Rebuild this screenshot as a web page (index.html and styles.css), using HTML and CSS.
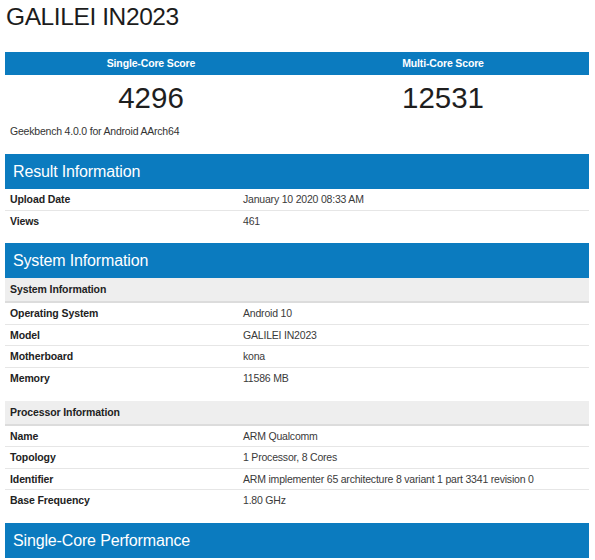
FILE: index.html
```html
<!DOCTYPE html>
<html>
<head>
<meta charset="utf-8">
<link rel="stylesheet" href="styles.css">
</head>
<body>
<div class="page">
  <h1 class="title">GALILEI IN2023</h1>
  <div class="scores">
    <div class="score-col">
      <div class="score-head">Single-Core Score</div>
      <div class="score-val">4296</div>
    </div>
    <div class="score-col">
      <div class="score-head">Multi-Core Score</div>
      <div class="score-val">12531</div>
    </div>
  </div>
  <div class="version">Geekbench 4.0.0 for Android AArch64</div>

  <section class="section">
    <h2 class="section-head">Result Information</h2>
    <div class="table">
      <div class="row"><span class="label">Upload Date</span><span class="value">January 10 2020 08:33 AM</span></div>
      <div class="row"><span class="label">Views</span><span class="value">461</span></div>
    </div>
  </section>

  <section class="section">
    <h2 class="section-head">System Information</h2>
    <div class="table">
      <div class="subhead">System Information</div>
      <div class="row"><span class="label">Operating System</span><span class="value">Android 10</span></div>
      <div class="row"><span class="label">Model</span><span class="value">GALILEI IN2023</span></div>
      <div class="row"><span class="label">Motherboard</span><span class="value">kona</span></div>
      <div class="row"><span class="label">Memory</span><span class="value">11586 MB</span></div>
    </div>
    <div class="table table-gap">
      <div class="subhead">Processor Information</div>
      <div class="row"><span class="label">Name</span><span class="value">ARM Qualcomm</span></div>
      <div class="row"><span class="label">Topology</span><span class="value">1 Processor, 8 Cores</span></div>
      <div class="row"><span class="label">Identifier</span><span class="value">ARM implementer 65 architecture 8 variant 1 part 3341 revision 0</span></div>
      <div class="row"><span class="label">Base Frequency</span><span class="value">1.80 GHz</span></div>
    </div>
  </section>

  <section class="section">
    <h2 class="section-head">Single-Core Performance</h2>
  </section>
</div>
</body>
</html>
```

FILE: styles.css
```css
* { box-sizing: border-box; }
html, body { margin: 0; padding: 0; background: #fff; }
body {
  font-family: "Liberation Sans", Arial, sans-serif;
  color: #333;
}
.page {
  padding: 0 6px 0 5px;
}
.title {
  margin: 0 0 20px 0;
  padding: 2px 0 0 1px;
  font-size: 24.5px;
  letter-spacing: -0.4px;
  line-height: 30px;
  font-weight: normal;
  color: #1c1c1c;
}
.scores {
  display: grid;
  grid-template-columns: 1fr 1fr;
}
.score-head {
  background: #0b7bbf;
  color: #fff;
  font-weight: bold;
  font-size: 10.5px;
  letter-spacing: -0.15px;
  height: 23px;
  line-height: 23px;
  text-align: center;
}
.score-val {
  padding-top: 5px;
  font-size: 29.5px;
  line-height: 36px;
  text-align: center;
  color: #1e1e1e;
}
.version {
  padding: 8px 5px 16px 5px;
  font-size: 10.5px;
  letter-spacing: -0.2px;
  line-height: 14px;
  color: #333;
}
.section {
  margin-bottom: 12px;
}
.section-head {
  margin: 0;
  height: 35px;
  line-height: 35px;
  padding-left: 8px;
  background: #0b7bbf;
  color: #fff;
  font-size: 16px;
  letter-spacing: -0.15px;
  font-weight: normal;
}
.table-gap {
  margin-top: 12px;
}
.subhead {
  background: #eeeeee;
  height: 25px;
  line-height: 23px;
  padding-left: 5px;
  border-bottom: 2px solid #dcdcdc;
  font-weight: bold;
  font-size: 10.5px;
  letter-spacing: -0.1px;
  color: #222;
}
.row {
  display: grid;
  grid-template-columns: 233px 1fr;
  line-height: 20.6px;
  font-size: 10.5px;
}
.row + .row {
  border-top: 1px solid #e6e6e6;
}
.label {
  padding-left: 5px;
  font-weight: bold;
  letter-spacing: -0.1px;
  color: #222;
}
.value {
  padding-left: 5px;
  letter-spacing: -0.2px;
  color: #3a3a3a;
}
```
